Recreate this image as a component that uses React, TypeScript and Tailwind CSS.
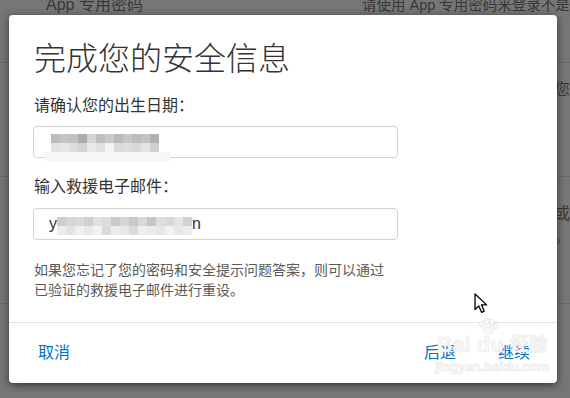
import React from 'react';

const cjk = "font-['Liberation_Sans','Noto_Sans_CJK_SC',sans-serif]";

// blurred (mosaic) value shown inside an input
function Mosaic({ top, bottom }: { top: string[]; bottom: string[] }) {
    return (
        <div className="flex flex-col">
            <div className="flex">
                {top.map((c, i) => (
                    <div key={i} className="w-[9px] h-[9px]" style={{ backgroundColor: c }} />
                ))}
            </div>
            <div className="flex">
                {bottom.map((c, i) => (
                    <div key={i} className="w-[9px] h-[9px]" style={{ backgroundColor: c }} />
                ))}
            </div>
        </div>
    );
}

function Cursor() {
    return (
        <svg width="14" height="21" viewBox="0 0 14 21" className="absolute left-[465px] top-[278px]">
            <path
                d="M1 1 L1 16.5 L4.8 12.9 L7.6 19.3 L10.2 18.1 L7.5 11.9 L12.6 11.9 Z"
                fill="#fff"
                stroke="#000"
                strokeWidth="1.3"
                strokeLinejoin="round"
            />
        </svg>
    );
}

function Watermark() {
    return (
        <div className="absolute left-[426px] top-[318px] flex flex-col items-center pointer-events-none select-none">
            <div className="flex items-end gap-[6px] text-[22px] leading-[24px] font-bold text-[#f8f8f8] [-webkit-text-stroke:0.5px_#e6e6e6] font-['Liberation_Sans','Noto_Sans_CJK_SC',sans-serif]">
                <span>Bai</span>
                <span className="relative">
                    du
                    <svg width="22" height="16" viewBox="0 0 22 16" className="absolute -top-[15px] left-0">
                        <g fill="#f8f8f8" stroke="#e2e2e2" strokeWidth="0.8">
                            <ellipse cx="5" cy="6" rx="2.5" ry="3.2" />
                            <ellipse cx="10" cy="3.5" rx="2.5" ry="3.2" />
                            <ellipse cx="15" cy="4" rx="2.5" ry="3.2" />
                            <ellipse cx="19" cy="8" rx="2.2" ry="2.8" />
                            <ellipse cx="11.5" cy="12" rx="5" ry="3.6" />
                        </g>
                    </svg>
                </span>
                <span className="text-[19px]">经验</span>
            </div>
            <span className="mt-[3px] text-[13px] leading-[14px] font-bold text-[#f6f6f6] [-webkit-text-stroke:0.4px_#e6e6e6] font-['Liberation_Sans',sans-serif]">
                jingyan.baidu.com
            </span>
        </div>
    );
}

export default function App() {
    return (
        <div className={`relative w-[570px] h-[398px] overflow-hidden bg-[#767676] ${cjk}`}>
            {/* dimmed page behind the dialog */}
            <div className="flex flex-col text-[16px] leading-[20px] text-[#383838]">
                <div className="h-[68px] border-b border-[#6a6a6a] flex -mt-[5px]">
                    <div className="w-[362px] pl-[46px] shrink-0">App 专用密码</div>
                    <div className="whitespace-nowrap text-[14.5px]">请使用 App 专用密码来登录不是由</div>
                </div>
                <div className="h-[114px] border-b border-[#6a6a6a] flex pt-[17px]">
                    <div className="w-[362px] shrink-0"></div>
                    <div className="w-[210px] text-right whitespace-nowrap">为了保护您的帐户，您</div>
                </div>
                <div className="h-[127px] border-b border-[#6a6a6a] flex pt-[25px]">
                    <div className="w-[362px] shrink-0"></div>
                    <div className="w-[210px] text-right whitespace-nowrap leading-[23px]">
                        当您更改救援电子邮件或
                        <br />
                        以便进行验证。
                    </div>
                </div>
            </div>

            {/* dialog */}
            <div className="absolute left-[9px] top-[15px] w-[548px] h-[368px] bg-white rounded-[4px] shadow-[0_2px_9px_rgba(0,0,0,0.55)] flex flex-col">
                <div className="h-[307px] px-[24px] pt-[24px] flex flex-col">
                    <h1 className="text-[32px] leading-[40px] font-light text-[#333] pl-[1px]">完成您的安全信息</h1>
                    <label className="mt-[15px] text-[16px] leading-[24px] text-[#333] pl-[1px]">请确认您的出生日期：</label>
                    <div className="mt-[8px] w-[365px] h-[32px] rounded-[4px] border border-[#d2d2d2] relative">
                        <div className="absolute left-[17px] top-[7px]">
                            <Mosaic
                                top={['#bdbdbd', '#c4c4c4', '#c2c2c2', '#ababab', '#d6d6d6', '#bfbfbf', '#c9c9c9', '#b9b9b9', '#c6c6c6', '#bdbdbd', '#c3c3c3', '#b2b2b2']}
                                bottom={['#e2e2e2', '#e6e6e6', '#dddddd', '#d4d4d4', '#e8e8e8', '#e0e0e0', '#f3f3f3', '#dadada', '#dddddd', '#d9d9d9', '#e4e4e4', '#cfcfcf']}
                            />
                        </div>
                        <div className="absolute left-[10px] top-[25px] w-[126px] h-[9px] bg-[#f6f6f6]" />
                    </div>
                    <label className="mt-[17px] text-[16px] leading-[24px] text-[#333] pl-[1px]">输入救援电子邮件：</label>
                    <div className="mt-[9px] w-[365px] h-[32px] rounded-[4px] border border-[#d2d2d2] flex items-center pl-[15px] text-[16px] text-[#333]">
                        <span>y</span>
                        <div className="mt-[3px]">
                            <Mosaic
                                top={['#cdcdcd', '#d6d6d6', '#d9d9d9', '#d0d0d0', '#e0e0e0', '#dcdcdc', '#cbcbcb', '#d6d6d6', '#c8c8c8', '#d5d9de', '#c7c7c7', '#dedede', '#d8d8d8', '#e4e4e4', '#d2d2d2']}
                                bottom={['#ececec', '#e4e4e4', '#f0f0f0', '#e9e9e9', '#f2f2f2', '#dadada', '#ededed', '#e8e8e8', '#d9dcdf', '#efefef', '#ebebeb', '#e6e6e6', '#f1f1f1', '#e7e7e7', '#ededed']}
                            />
                        </div>
                        <span>n</span>
                    </div>
                    <p className="mt-[20px] text-[14px] leading-[20px] text-[#5a5a5a] pl-[1px]">
                        如果您忘记了您的密码和安全提示问题答案，则可以通过
                        <br />
                        已验证的救援电子邮件进行重设。
                    </p>
                </div>
                <div className="h-[61px] border-t border-[#e3e3e3] flex items-center justify-between pl-[29px] pr-[27px] text-[16px] text-[#0070c9]">
                    <button className="leading-[24px]">取消</button>
                    <div className="flex gap-[42px]">
                        <button className="leading-[24px]">后退</button>
                        <button className="leading-[24px]">继续</button>
                    </div>
                </div>
                <Watermark />
                <Cursor />
            </div>
        </div>
    );
}
